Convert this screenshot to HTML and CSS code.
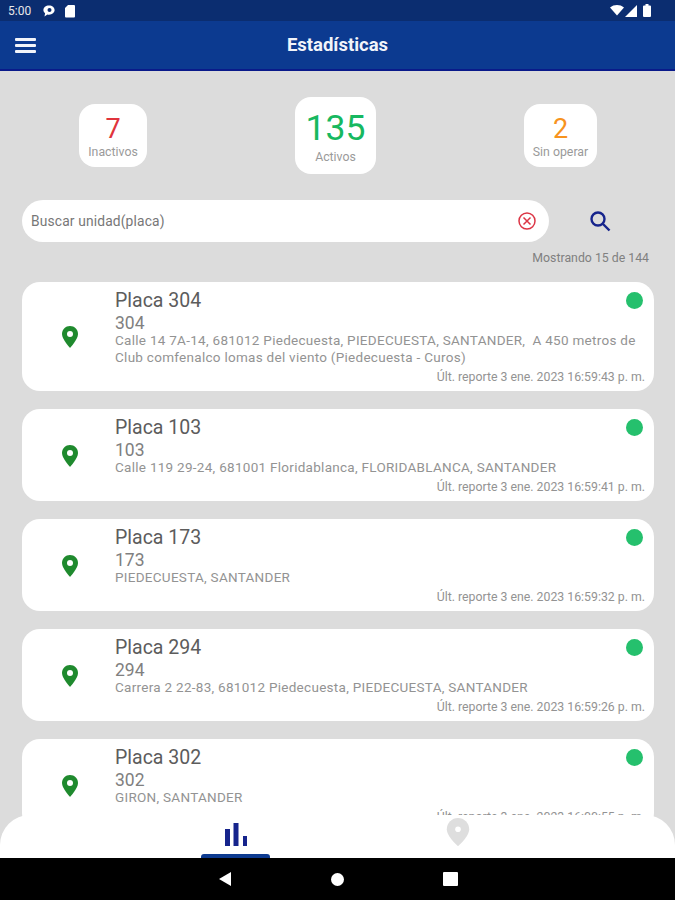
FILE: index.html
```html
<!DOCTYPE html>
<html lang="es">
<head>
<meta charset="utf-8">
<title>Estadísticas</title>
<link rel="stylesheet" href="styles.css">
</head>
<body>
<div class="screen">
  <div class="statusbar">
    <div class="status-left">
      <span class="clock">5:00</span>
      <svg class="status-icon" viewBox="0 0 14 14" width="14" height="14"><path d="M7 1.5c3.2 0 5.6 2 5.6 4.6S10.200 10.700 7 10.700c-.6 0-1.100-.1-1.600-.2L2.500 12.500l.6-3.200C2 8.400 1.400 7.300 1.400 6.100 1.400 3.500 3.800 1.500 7 1.500z" fill="#fff"/><circle cx="7.500" cy="6" r="2" fill="#0b2d70"/></svg>
      <svg class="status-icon" viewBox="0 0 12 14" width="12" height="14"><path d="M4 1h6a1 1 0 0 1 1 1v10.500a1 1 0 0 1-1 1H2a1 1 0 0 1-1-1V4z" fill="#fff"/></svg>
    </div>
    <div class="status-right">
      <svg viewBox="0 0 14 11" width="14" height="11"><path d="M0 2.500C4-.8 10-.8 14 2.500L7 10.500z" fill="#fff"/></svg>
      <svg viewBox="0 0 12 12" width="12" height="12"><path d="M12 0v12H0z" fill="#fff"/></svg>
      <svg class="battery" viewBox="0 0 8 13" width="8" height="13"><path d="M2.500 0h3v1.500H7a1 1 0 0 1 1 1V12a1 1 0 0 1-1 1H1a1 1 0 0 1-1-1V2.500a1 1 0 0 1 1-1h1.500z" fill="#fff"/></svg>
    </div>
  </div>

  <header class="appbar">
    <button class="menu" aria-label="Menú"><span></span><span></span><span></span></button>
    <h1>Estadísticas</h1>
  </header>

  <main class="content">
    <section class="stats">
      <div class="stat">
        <span class="stat-num red">7</span>
        <span class="stat-label">Inactivos</span>
      </div>
      <div class="stat stat-big">
        <span class="stat-num green">135</span>
        <span class="stat-label">Activos</span>
      </div>
      <div class="stat stat-wide">
        <span class="stat-num orange">2</span>
        <span class="stat-label">Sin operar</span>
      </div>
    </section>

    <section class="search-row">
      <div class="search">
        <span class="search-text">Buscar unidad(placa)</span>
        <svg viewBox="0 0 20 20" width="20" height="20"><circle cx="10" cy="10" r="8" fill="none" stroke="#dc3545" stroke-width="1.500"/><path d="M6.500 6.500l7 7M13.500 6.500l-7 7" stroke="#dc3545" stroke-width="1.500"/></svg>
      </div>
      <svg class="search-btn" viewBox="0 0 24 24" width="24" height="24"><circle cx="10" cy="10" r="6.500" fill="none" stroke="#16248c" stroke-width="2.400"/><path d="M15 15l6.500 6.500" stroke="#16248c" stroke-width="2.400"/></svg>
    </section>
    <p class="count">Mostrando 15 de 144</p>

    <section class="list">
      <article class="card">
        <svg class="pin" viewBox="0 0 16 22" width="16" height="22"><path d="M8 0C3.600 0 0 3.500 0 8c0 5.500 8 14 8 14s8-8.500 8-14c0-4.500-3.600-8-8-8z" fill="#1f8a2e"/><circle cx="8" cy="8" r="3" fill="#fff"/></svg>
        <div class="info">
          <div class="title-row"><h2>Placa 304</h2><span class="dot"></span></div>
          <div class="code">304</div>
          <p class="addr">Calle 14 7A-14, 681012 Piedecuesta, PIEDECUESTA, SANTANDER,&nbsp; A 450 metros de Club comfenalco lomas del viento (Piedecuesta - Curos)</p>
          <div class="report">Últ. reporte 3 ene. 2023 16:59:43 p. m.</div>
        </div>
      </article>
      <article class="card">
        <svg class="pin" viewBox="0 0 16 22" width="16" height="22"><path d="M8 0C3.600 0 0 3.500 0 8c0 5.500 8 14 8 14s8-8.500 8-14c0-4.500-3.600-8-8-8z" fill="#1f8a2e"/><circle cx="8" cy="8" r="3" fill="#fff"/></svg>
        <div class="info">
          <div class="title-row"><h2>Placa 103</h2><span class="dot"></span></div>
          <div class="code">103</div>
          <p class="addr">Calle 119 29-24, 681001 Floridablanca, FLORIDABLANCA, SANTANDER</p>
          <div class="report">Últ. reporte 3 ene. 2023 16:59:41 p. m.</div>
        </div>
      </article>
      <article class="card">
        <svg class="pin" viewBox="0 0 16 22" width="16" height="22"><path d="M8 0C3.600 0 0 3.500 0 8c0 5.500 8 14 8 14s8-8.500 8-14c0-4.500-3.600-8-8-8z" fill="#1f8a2e"/><circle cx="8" cy="8" r="3" fill="#fff"/></svg>
        <div class="info">
          <div class="title-row"><h2>Placa 173</h2><span class="dot"></span></div>
          <div class="code">173</div>
          <p class="addr">PIEDECUESTA, SANTANDER</p>
          <div class="report">Últ. reporte 3 ene. 2023 16:59:32 p. m.</div>
        </div>
      </article>
      <article class="card">
        <svg class="pin" viewBox="0 0 16 22" width="16" height="22"><path d="M8 0C3.600 0 0 3.500 0 8c0 5.500 8 14 8 14s8-8.500 8-14c0-4.500-3.600-8-8-8z" fill="#1f8a2e"/><circle cx="8" cy="8" r="3" fill="#fff"/></svg>
        <div class="info">
          <div class="title-row"><h2>Placa 294</h2><span class="dot"></span></div>
          <div class="code">294</div>
          <p class="addr">Carrera 2 22-83, 681012 Piedecuesta, PIEDECUESTA, SANTANDER</p>
          <div class="report">Últ. reporte 3 ene. 2023 16:59:26 p. m.</div>
        </div>
      </article>
      <article class="card">
        <svg class="pin" viewBox="0 0 16 22" width="16" height="22"><path d="M8 0C3.600 0 0 3.500 0 8c0 5.500 8 14 8 14s8-8.500 8-14c0-4.500-3.600-8-8-8z" fill="#1f8a2e"/><circle cx="8" cy="8" r="3" fill="#fff"/></svg>
        <div class="info">
          <div class="title-row"><h2>Placa 302</h2><span class="dot"></span></div>
          <div class="code">302</div>
          <p class="addr">GIRON, SANTANDER</p>
          <div class="report">Últ. reporte 3 ene. 2023 16:00:55 p. m.</div>
        </div>
      </article>
    </section>

    <nav class="tabs">
      <div class="tab tab-active">
        <svg viewBox="0 0 24 24" width="24" height="24"><path d="M1 6h5v17H1zM9.500 0h5v23h-5zM19 13h4v10h-4z" fill="#16248c"/></svg>
      </div>
      <div class="tab">
        <svg viewBox="0 0 24 30" width="24" height="28"><path d="M12 0C5.400 0 0 5.300 0 12c0 8 12 18 12 18s12-10 12-18c0-6.700-5.400-12-12-12z" fill="#dedede"/><circle cx="12" cy="12" r="3" fill="#fff"/></svg>
      </div>
    </nav>
  </main>

  <footer class="sysnav">
    <svg viewBox="0 0 14 14" width="14" height="14"><path d="M1 7l12-7v14z" fill="#fff"/></svg>
    <span class="sys-circle"></span>
    <span class="sys-square"></span>
  </footer>
</div>
</body>
</html>
```

FILE: styles.css
```css
* { box-sizing: border-box; }
html, body { margin: 0; padding: 0; }
body { font-family: Roboto, "Liberation Sans", sans-serif; background: #dcdcdc; }
h1, h2, p { margin: 0; font-weight: 400; }

.screen { width: 675px; height: 900px; display: flex; flex-direction: column; overflow: hidden; }

.statusbar {
  height: 21px; flex: none; background: #0b2d70; color: #fff;
  display: flex; justify-content: space-between; align-items: center;
  padding: 0 24px 0 8px;
}
.status-left { display: flex; align-items: center; gap: 8px; }
.status-right { display: flex; align-items: center; gap: 1px; }
.battery { margin-left: 5px; }
.clock { font-size: 12px; color: #e8e8e8; margin-right: 3px; }
.status-icon { display: block; }

.appbar {
  height: 50px; flex: none; background: #0c3a90; border-bottom: 2px solid #0a1a8a;
  display: flex; align-items: center; justify-content: center; position: relative;
}
.appbar h1 { font-size: 18.500px; font-weight: 700; color: #f2f4fa; }
.menu {
  position: absolute; left: 15px; top: 17px; width: 21px; height: 15px;
  padding: 0; background: none; border: 0; display: flex; flex-direction: column; justify-content: space-between;
}
.menu span { display: block; height: 3px; background: #f2f4fa; border-radius: 1px; }

.content { flex: 1; min-height: 0; position: relative; overflow: hidden; display: flex; flex-direction: column; }

.stats {
  height: 77px; flex: none; margin-top: 26px; padding: 0 78px 0 79px;
  display: flex; justify-content: space-between; align-items: center;
}
.stat {
  width: 68px; height: 63px; background: #fff; border-radius: 16px; padding-top: 2px;
  display: flex; flex-direction: column; align-items: center; justify-content: center;
}
.stat-big { width: 81px; height: 77px; padding-top: 0; }
.stat-wide { width: 73px; }
.stat-num { font-size: 27px; line-height: 30px; }
.stat-big .stat-num { font-size: 35.500px; line-height: 42px; }
.stat-label { font-size: 12.300px; line-height: 14px; color: #9a9a9a; margin-top: 1px; }
.red { color: #e0343c; }
.green { color: #17b860; }
.orange { color: #f7931e; }

.search-row { flex: none; display: flex; align-items: center; padding-left: 22px; margin-top: 26px; }
.search {
  width: 527px; height: 42px; background: #fff; border-radius: 21px;
  display: flex; align-items: center; justify-content: space-between;
  padding: 0 12px 0 9px;
}
.search-text { font-size: 13.800px; letter-spacing: .15px; color: #777; }
.search-btn { margin-left: 39px; }

.count { flex: none; font-size: 12.300px; line-height: 14px; color: #808080; text-align: right; padding-right: 26px; margin-top: 9px; }

.list { flex: none; display: flex; flex-direction: column; gap: 18px; padding: 0 21px 0 22px; margin-top: 17px; }
.card { background: #fff; border-radius: 18px; display: flex; align-items: center; padding: 8px 9px 7px 40px; }
.pin { flex: none; margin-right: 37px; }
.info { flex: 1; min-width: 0; }
.title-row { display: flex; justify-content: space-between; align-items: center; height: 22px; padding-right: 2px; }
.title-row h2 { font-size: 19.500px; line-height: 22px; color: #5c5c5c; }
.dot { width: 17px; height: 17px; border-radius: 50%; background: #25c06d; margin-bottom: 2px; }
.code { font-size: 17.500px; line-height: 18px; margin-top: 2px; color: #808080; }
.addr { font-size: 13.500px; letter-spacing: .28px; line-height: 17px; color: #939393; padding-right: 6px; min-height: 17px; }
.report { font-size: 12.300px; line-height: 14px; color: #939393; text-align: right; margin-top: 4px; }

.tabs {
  position: absolute; left: 0; right: 0; bottom: 0; height: 43px;
  background: #fff; border-radius: 30px 30px 0 0;
  display: grid; grid-template-columns: 1fr 1fr;
}
.tab { display: flex; justify-content: center; align-items: flex-start; padding-top: 8px; position: relative; }
.tab:first-child { padding-left: 134px; }
.tab:first-child::after {
  content: ""; position: absolute; left: 201px; bottom: 0; width: 69px; height: 4px;
  background: #0c3a90; border-radius: 3px 3px 0 0;
}
.tab:last-child { padding-top: 3px; padding-right: 96px; }

.sysnav {
  height: 42px; flex: none; background: #000; display: flex; align-items: center;
  padding-left: 218px; gap: 99px;
}
.sys-circle { width: 13px; height: 13px; border-radius: 50%; background: #fff; }
.sys-square { width: 15px; height: 14px; border-radius: 1px; background: #fff; }
```
